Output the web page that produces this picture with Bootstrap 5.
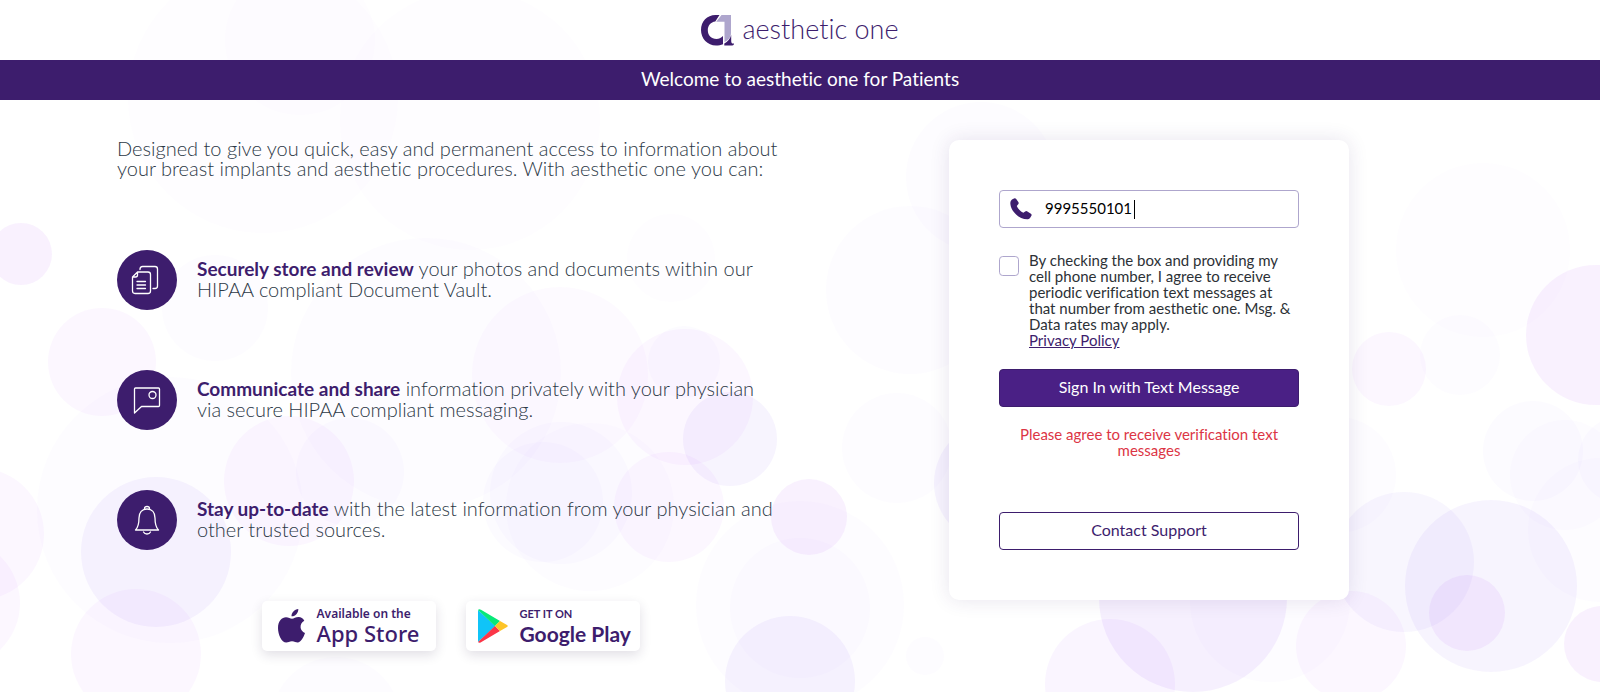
<!DOCTYPE html>
<html lang="en">
<head>
<meta charset="utf-8">
<meta name="viewport" content="width=device-width, initial-scale=1">
<title>aesthetic one for Patients</title>
<link href="https://cdn.jsdelivr.net/npm/bootstrap@5.3.0/dist/css/bootstrap.min.css" rel="stylesheet">
<style>
  :root { --brand: #3d1d6d; --brand-soft: #aea6cd; --ink: #2c3846; }
  body { font-family: Lato, "Open Sans", sans-serif; font-variant-ligatures: no-common-ligatures; font-weight: 400; color: var(--ink); background: #fff; }
  .page { min-height: 100vh; overflow: hidden; isolation: isolate; }
  .bubbles { inset: 0; z-index: -1; }
  .brand-bar { height: 60px; }
  .brand-name { font-size: 27px; font-weight: 300; line-height: 30px; color: var(--brand); padding-bottom: 3px; }
  .welcome { height: 40px; font-size: 19px; line-height: 20px; background: var(--brand); color: #fff; padding-bottom: 2px; }
  .shell { max-width: 1396px; }
  .intro { font-size: 20px; font-weight: 300; line-height: 20px; padding: 38px 0 0 15px; }
  .lead-in { margin-bottom: 72px; }
  .features { gap: 60px; }
  .feature-icon { width: 60px; height: 60px; background: var(--brand); }
  .features p { padding: 0 0 4px 20px; }
  .features strong { color: var(--brand); font-weight: 700; font-size: 19px; }
  .stores { margin-top: 51px; gap: 30px; }
  .store { width: 174px; height: 50px; border-radius: 5px; background: #fff; color: var(--brand); box-shadow: 0 4px 12px rgba(40, 30, 70, .14); }
  .store-top { font-family: "Noto Sans", sans-serif; font-weight: 600; font-size: 12px; line-height: 14px; }
  .store-name { font-family: "Noto Sans", sans-serif; font-weight: 500; font-size: 22px; line-height: 25px; }
  .play .store-top { font-family: Lato, sans-serif; font-weight: 700; font-size: 11px; }
  .play .store-name { font-family: Lato, sans-serif; font-weight: 700; font-size: 21px; }
  .signin { width: 400px; min-height: 460px; padding: 50px; border-radius: 10px; background: #fff; box-shadow: 0 0 20px rgba(61, 29, 109, .12); }
  .phone { height: 38px; border: 1px solid var(--brand-soft); border-radius: 4px; padding: 0 10px 2px 45px; font-size: 15px; color: #000;
    background: linear-gradient(#000, #000) 134px 9px / 1px 19px no-repeat #fff; }
  .phone:focus { outline: none; }
  .phone-icon { left: 11px; top: 8px; }
  .consent { margin-top: 24px; gap: 10px; font-size: 15px; line-height: 16px; color: #2c3136; }
  .consent input { width: 20px; height: 20px; margin: 4px 0 0; border: 1px solid var(--brand-soft); border-radius: 4px; }
  .consent a { color: var(--brand); }
  .action { height: 38px; border: 1px solid var(--brand); border-radius: 4px; font-size: 16px; line-height: 20px; padding: 0 12px 2px; }
  .action-main { margin-top: 21px; background: #4a2085; color: #fff; }
  .action-help { margin-top: 54px; background: #fff; color: var(--brand); }
  .notice { margin: 19px 0 0; font-size: 15px; line-height: 16px; color: #dc3545; }
</style>
</head>
<body>
<div class="page position-relative">
  <svg class="bubbles position-absolute w-100 h-100" viewBox="0 0 1600 692" preserveAspectRatio="xMidYMid slice" aria-hidden="true">
    <g fill="#9050f0" fill-opacity=".018">
      <circle cx="426" cy="373" r="135"/>
      <circle cx="170" cy="510" r="133"/><circle cx="215" cy="308" r="53"/><circle cx="590" cy="507" r="84"/>
      <circle cx="800" cy="605" r="104"/><circle cx="800" cy="608" r="70"/><circle cx="336" cy="722" r="65"/>
      <circle cx="981" cy="177" r="75"/><circle cx="910" cy="290" r="84"/><circle cx="897" cy="448" r="55"/>
      <circle cx="1460" cy="355" r="40"/><circle cx="1565" cy="475" r="55"/><circle cx="925" cy="656" r="19"/>
      <circle cx="1338" cy="475" r="58"/><circle cx="1600" cy="530" r="72"/><circle cx="1270" cy="602" r="80"/>
    </g>
    <g fill="#9050f0" fill-opacity=".01">
      <circle cx="263" cy="98" r="135"/><circle cx="300" cy="40" r="75"/>
      <circle cx="671" cy="258" r="44"/><circle cx="1483" cy="250" r="87"/><circle cx="470" cy="120" r="130"/>
    </g>
    <g fill="#b050f8" fill-opacity=".045">
      <circle cx="102" cy="362" r="54"/><circle cx="289" cy="481" r="65"/>
      <circle cx="669" cy="507" r="55"/><circle cx="136" cy="654" r="65"/><circle cx="-22" cy="534" r="66"/>
      <circle cx="-45" cy="603" r="65"/><circle cx="685" cy="397" r="68"/><circle cx="1389" cy="369" r="37"/>
      <circle cx="1351" cy="646" r="55"/>
    </g>
    <circle cx="560" cy="375" r="88" fill="#b050f8" fill-opacity=".03"/>
    <g fill="#b050f8" fill-opacity=".08">
      <circle cx="21" cy="254" r="31"/><circle cx="809" cy="517" r="38"/><circle cx="1596" cy="335" r="70"/>
      <circle cx="1602" cy="644" r="38"/><circle cx="1467" cy="613" r="38"/><circle cx="1110" cy="684" r="65" fill-opacity=".06"/>
    </g>
    <g fill="#8048f8" fill-opacity=".025">
      <circle cx="350" cy="472" r="54"/><circle cx="543" cy="502" r="60"/><circle cx="561" cy="493" r="71"/>
      <circle cx="684" cy="362" r="36"/><circle cx="1533" cy="451" r="50"/><circle cx="1622" cy="460" r="44"/>
    </g>
    <g fill="#7848f4" fill-opacity=".06">
      <circle cx="156" cy="552" r="75"/><circle cx="730" cy="439" r="47"/><circle cx="790" cy="681" r="65"/>
      <circle cx="995" cy="483" r="61"/><circle cx="1491" cy="586" r="86"/><circle cx="1404" cy="562" r="70" fill-opacity=".05"/>
    </g>
    <circle cx="1193" cy="598" r="94" fill="#8f40f0" fill-opacity=".08"/>
  </svg>

  <header class="brand-bar d-flex align-items-center justify-content-center">
    <svg width="33" height="31" viewBox="0 0 33 31" role="img" aria-label="aesthetic one logo">
      <path fill="#3d1d6d" d="M18.500 0H14.500C6 0 0 6.500 0 15s6.500 15.500 15 15.500c2.500 0 5-.3 7-1.200V21c-2 2-4 3-6.500 3-5.300 0-8.700-3.600-8.700-9 0-4.500 3-8 7.500-8.600z"/>
      <path fill="#aea6cd" d="M20.500 0H30v18c0 4-2 7-6.500 9V6.800h-8.300z"/>
      <path fill="#3d1d6d" d="M30.200 20c-1 4-3.500 6.500-6.900 8.600V30.500h8c1 0 1.700-.8 1.700-2-2 .4-2.800-.5-2.800-2.500z"/>
    </svg>
    <span class="brand-name ms-2">aesthetic one</span>
  </header>

  <div class="welcome d-flex align-items-center justify-content-center">Welcome to aesthetic one for Patients</div>

  <main class="shell container-fluid px-0">
    <div class="row g-0">
      <section class="intro col-lg-6">
        <p class="lead-in">Designed to give you quick, easy and permanent access to information about<br class="d-none d-lg-inline"> your breast implants and aesthetic procedures. With aesthetic one you can:</p>
        <div class="features d-flex flex-column">
          <div class="d-flex align-items-center">
            <div class="feature-icon rounded-circle flex-shrink-0 d-flex align-items-center justify-content-center">
              <svg class="me-1" width="28" height="30" viewBox="0 0 28 30" fill="none" stroke="#fff" stroke-width="1.300" stroke-linejoin="round" stroke-linecap="round" aria-hidden="true">
                <path d="M6.500 7H17q2.500 0 2.500 2.500V26q0 2.500-2.500 2.500H4Q1.500 28.500 1.500 26V12zM6.500 7v3q0 2-2 2h-3M9 4.500V4q0-2.500 2.500-2.500H24q2.500 0 2.500 2.500v17q0 2.500-2.500 2.500h-2"/>
                <path d="M6 16.500h8.500M6 20h8.500M6 23.500h8.500"/>
              </svg>
            </div>
            <p class="mb-0"><strong>Securely store and review</strong> your photos and documents within our<br class="d-none d-lg-inline"> HIPAA compliant Document Vault.</p>
          </div>
          <div class="d-flex align-items-center">
            <div class="feature-icon rounded-circle flex-shrink-0 d-flex align-items-center justify-content-center">
              <svg width="28" height="27" viewBox="0 0 28 27" fill="none" stroke="#fff" stroke-width="1.300" stroke-linejoin="round" aria-hidden="true">
                <path d="M2.500 1h23q1 0 1 1v16.500q0 1-1 1H8.500L1.500 26V2q0-1 1-1z"/><circle cx="19.500" cy="8" r="3.500"/>
              </svg>
            </div>
            <p class="mb-0"><strong>Communicate and share</strong> information privately with your physician<br class="d-none d-lg-inline"> via secure HIPAA compliant messaging.</p>
          </div>
          <div class="d-flex align-items-center">
            <div class="feature-icon rounded-circle flex-shrink-0 d-flex align-items-center justify-content-center">
              <svg width="26" height="30" viewBox="0 0 26 30" fill="none" stroke="#fff" stroke-width="1.300" stroke-linejoin="round" stroke-linecap="round" aria-hidden="true">
                <path d="M1.500 25c3-3 3.500-6 3.500-12 0-5.500 3-9 8-9s8 3.500 8 9c0 6 .5 9 3.500 12zM10.500 4.300V3.500q0-2 2.500-2t2.500 2v.8M9.500 27q1 2 3.500 2t3.500-2"/>
              </svg>
            </div>
            <p class="mb-0"><strong>Stay up-to-date</strong> with the latest information from your physician and<br class="d-none d-lg-inline"> other trusted sources.</p>
          </div>
        </div>
        <div class="stores d-flex flex-wrap justify-content-center pe-3">
          <a class="store d-flex align-items-center text-decoration-none ps-3" href="#">
            <svg class="flex-shrink-0" width="27" height="34" viewBox="0 0 27 34" fill="#3d1d6d" aria-hidden="true">
              <path d="M20.300 0c.4 3.600-3 7.500-6.800 7.300C13.200 3.800 16.600.4 20.300 0z"/>
              <path d="M26.300 11.700c-5.300 3-4.800 10 .7 12.300-1.300 4-4.200 9.500-7.300 9.500-2 0-3-1.300-5.700-1.300s-3.800 1.300-5.700 1.300C3.500 33.500 0 25.500 0 19c0-7 4-10.700 8-10.700 2.500 0 4.300 1.500 6 1.500 1.800 0 3.700-1.700 6.700-1.700 2.300 0 4.300 1.200 5.600 3.600z"/>
            </svg>
            <span class="d-flex flex-column ms-2 ps-1 text-nowrap"><span class="store-top">Available on the</span><span class="store-name">App Store</span></span>
          </a>
          <a class="store play d-flex align-items-center text-decoration-none ps-2" href="#">
            <svg class="flex-shrink-0 ms-1" width="30" height="34" viewBox="0 0 30 34" aria-hidden="true">
              <path fill="#10c4f8" d="M0 1v32l17.500-16z"/>
              <path fill="#08e878" d="M0 1Q1-.5 3 .8L22 12l-5 5z"/>
              <path fill="#fb3648" d="M0 33q1 1.500 3 .2L22 22l-5-5z"/>
              <path fill="#fdc428" d="M22 12l7 4q1.500 1 0 2l-7 4-5-5z"/>
            </svg>
            <span class="d-flex flex-column ms-2 ps-1 text-nowrap"><span class="store-top">GET IT ON</span><span class="store-name">Google Play</span></span>
          </a>
        </div>
      </section>

      <section class="col-lg-6 d-flex justify-content-center align-items-start mt-4 pt-3 pb-5">
        <form class="signin">
          <div class="position-relative">
            <input class="phone d-block w-100" type="tel" value="9995550101" aria-label="Cell phone number">
            <svg class="phone-icon position-absolute" width="22" height="22" viewBox="0 0 22 22" fill="#3d1d6d" aria-hidden="true">
              <path d="M2 1.500L4 .4q1.300-.6 2.200.6L8.300 4q.8 1.300-.1 2.300L6.800 8q1.700 4.300 6.500 6.700l1.900-1.300q1-.7 2.200 0l3.500 2.300q1.100.9.500 2.100l-1.200 2q-.8 1.200-2.200 1.400C9 21.700.5 13 .3 5Q.3 2.700 2 1.500z"/>
            </svg>
          </div>
          <div class="consent d-flex">
            <input class="form-check-input flex-shrink-0" type="checkbox" id="agree">
            <div class="text-nowrap">
              <label for="agree">By checking the box and providing my<br>cell phone number, I agree to receive<br>periodic verification text messages at<br>that number from aesthetic one. Msg. &amp;<br>Data rates may apply.</label>
              <a class="d-block" href="#">Privacy Policy</a>
            </div>
          </div>
          <button class="action action-main d-block w-100" type="button">Sign In with Text Message</button>
          <p class="notice text-center">Please agree to receive verification text messages</p>
          <button class="action action-help d-block w-100" type="button">Contact Support</button>
        </form>
      </section>
    </div>
  </main>
</div>
<script src="https://cdn.jsdelivr.net/npm/bootstrap@5.3.0/dist/js/bootstrap.bundle.min.js"></script>
</body>
</html>
